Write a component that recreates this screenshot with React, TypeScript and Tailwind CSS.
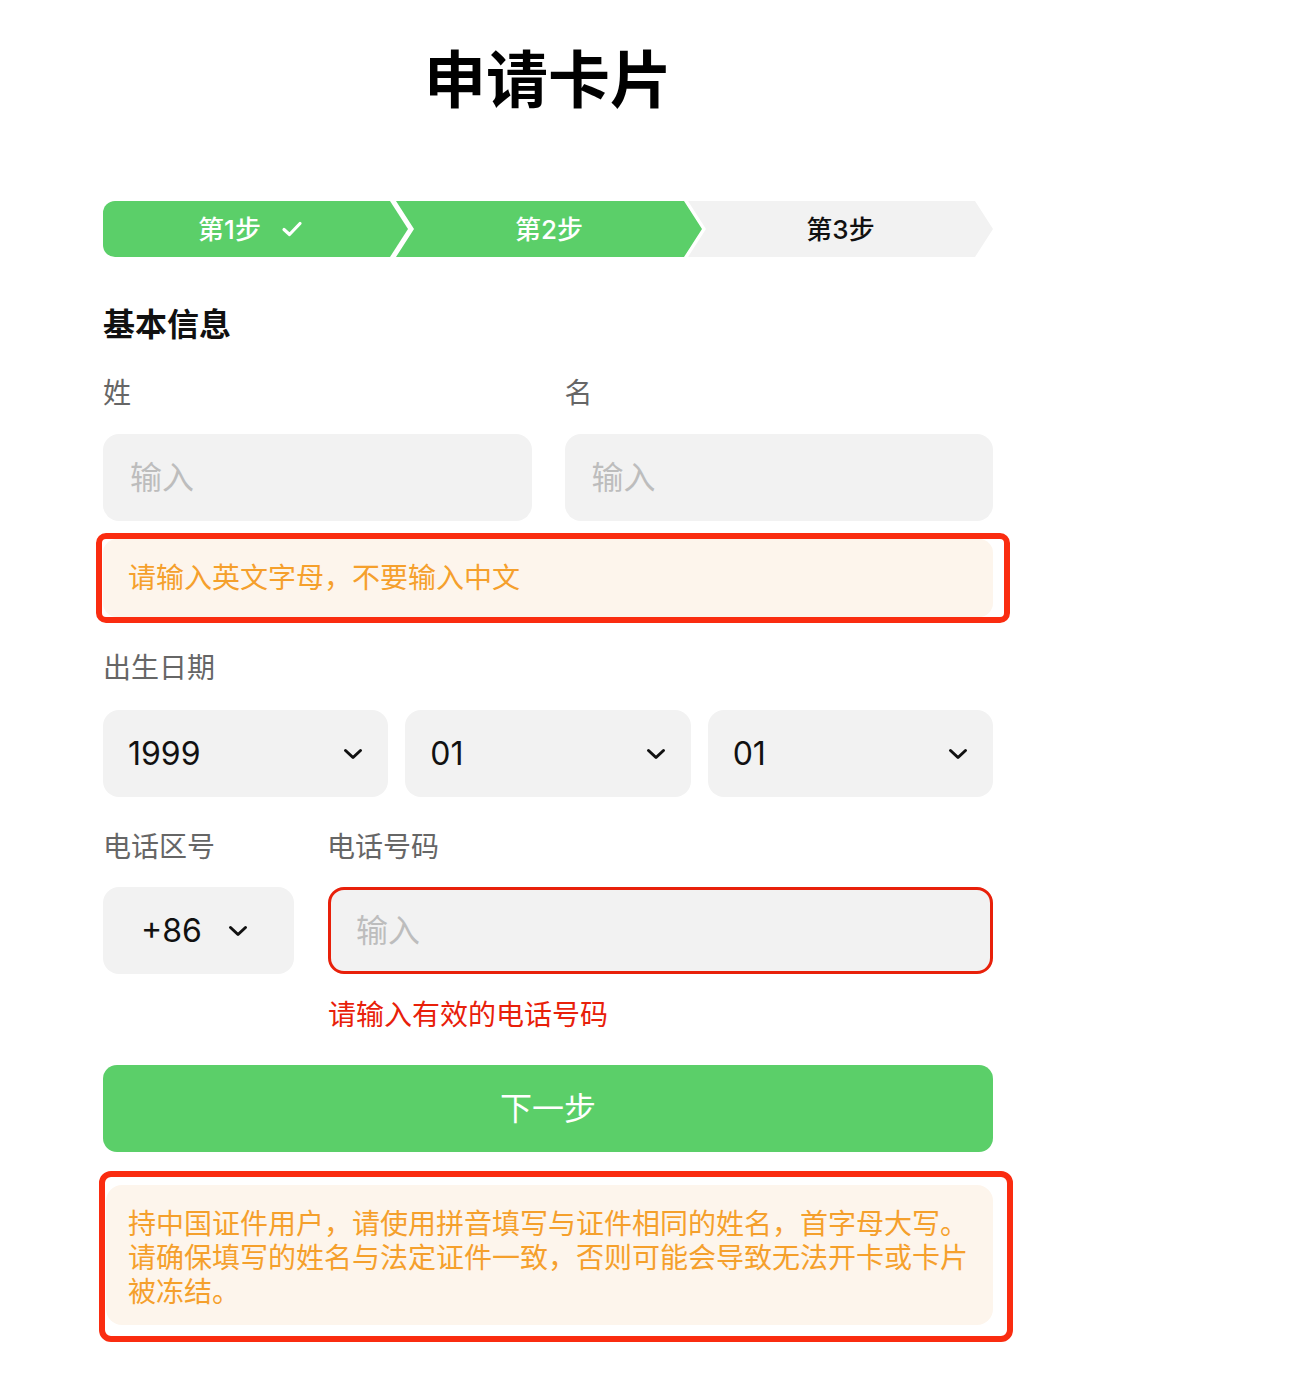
import React from 'react';

const font = "font-['Inter','Noto_Sans_CJK_SC',sans-serif]";

function Chevron() {
  return (
    <svg width="20" height="12" viewBox="0 0 20 12" fill="none">
      <path d="M2.5 2.5L10 9.5L17.5 2.5" stroke="#111" strokeWidth="3" strokeLinecap="round" strokeLinejoin="round" />
    </svg>
  );
}

function Steps() {
  return (
    <div className="mt-[90px] flex h-[56px]">
      <div className="flex w-[305px] shrink-0 items-center justify-center gap-5 rounded-l-[12px] bg-[#5bcf69] pr-[10px] text-[26px] font-medium text-white [clip-path:polygon(0_0,calc(100%_-_18px)_0,100%_50%,calc(100%_-_18px)_100%,0_100%)]">
        <span>第1步</span>
        <svg width="22" height="18" viewBox="0 0 22 18" fill="none">
          <path d="M3 9.5L8.5 14.5L19 3.5" stroke="#fff" strokeWidth="3.2" strokeLinecap="round" strokeLinejoin="round" />
        </svg>
      </div>
      <div className="-ml-[12px] flex w-[306px] shrink-0 items-center justify-center bg-[#5bcf69] text-[26px] font-medium text-white [clip-path:polygon(0_0,calc(100%_-_18px)_0,100%_50%,calc(100%_-_18px)_100%,0_100%,18px_50%)]">
        第2步
      </div>
      <div className="-ml-[14px] flex w-[305px] shrink-0 items-center justify-center bg-[#f2f2f2] text-[26px] font-medium text-[#111] [clip-path:polygon(0_0,calc(100%_-_18px)_0,100%_50%,calc(100%_-_18px)_100%,0_100%,18px_50%)]">
        第3步
      </div>
    </div>
  );
}

function TextInput({ className = '' }: { className?: string }) {
  return (
    <input
      placeholder="输入"
      className={`h-[87px] w-full rounded-[16px] bg-[#f2f2f2] px-[27px] text-[32px] text-[#111] outline-none placeholder:text-[#bdbdbd] ${className}`}
    />
  );
}

function Select({ value }: { value: string }) {
  return (
    <div className="flex h-[87px] items-center justify-between rounded-[16px] bg-[#f2f2f2] pl-[25px] pr-[25px] text-[32px] text-[#111]">
      <span>{value}</span>
      <Chevron />
    </div>
  );
}

export default function App() {
  return (
    <div className={`min-h-[1388px] bg-white ${font}`}>
      <div className="ml-[103px] w-[890px] pb-[46px]">
        <h1 className="mt-[51px] text-center text-[62px] font-bold leading-[60px] text-black">申请卡片</h1>

        <Steps />

        <h2 className="mt-[48px] text-[32px] font-semibold leading-[40px] text-[#111]">基本信息</h2>

        <div className="mt-[28px] grid grid-cols-2 gap-x-[33px]">
          <label className="text-[28px] leading-[40px] text-[#666]">姓</label>
          <label className="text-[28px] leading-[40px] text-[#666]">名</label>
          <div className="mt-[21px]">
            <TextInput />
          </div>
          <div className="mt-[21px]">
            <TextInput />
          </div>
        </div>

        <div className="mt-[12px] -ml-[7px] -mr-[17px] rounded-[10px] border-[6px] border-[#fa2c10] pl-[1px] pr-[11px]">
          <div className="flex h-[78px] items-center rounded-[14px] bg-[#fdf5ec] pl-[25px] text-[28px] text-[#f5a02c]">
            请输入英文字母，不要输入中文
          </div>
        </div>

        <label className="mt-[25px] block text-[28px] leading-[40px] text-[#666]">出生日期</label>
        <div className="mt-[22px] grid grid-cols-3 gap-[17px]">
          <Select value="1999" />
          <Select value="01" />
          <Select value="01" />
        </div>

        <div className="mt-[30px] grid grid-cols-[191px_1fr] gap-x-[34px]">
          <label className="text-[28px] leading-[40px] text-[#666]">电话区号</label>
          <label className="-ml-[1px] text-[28px] leading-[40px] text-[#666]">电话号码</label>
          <div className="mt-[20px] flex h-[87px] items-center justify-center gap-[26px] rounded-[16px] bg-[#f2f2f2] pr-[8px] text-[32px] text-[#111]">
            <span>+86</span>
            <Chevron />
          </div>
          <div className="mt-[20px]">
            <TextInput className="border-[3px] border-[#e8200a] pl-[25px]" />
          </div>
          <div />
          <p className="mt-[21px] text-[28px] leading-[40px] text-[#e8200a]">请输入有效的电话号码</p>
        </div>

        <button className="mt-[30px] flex h-[87px] w-full items-center justify-center rounded-[14px] bg-[#5bcf69] text-[32px] text-white">
          下一步
        </button>

        <div className="mt-[19px] -ml-[4px] -mr-[20px] rounded-[12px] border-[6px] border-[#fa2c10] pb-[11px] pl-[1px] pr-[14px] pt-[8px]">
          <div className="rounded-[16px] bg-[#fdf5ec] pb-[16px] pl-[22px] pr-[20px] pt-[22px] text-[28px] leading-[34px] text-[#f5a02c]">
            持中国证件用户，请使用拼音填写与证件相同的姓名，首字母大写。请确保填写的姓名与法定证件一致，否则可能会导致无法开卡或卡片被冻结。
          </div>
        </div>
      </div>
    </div>
  );
}
